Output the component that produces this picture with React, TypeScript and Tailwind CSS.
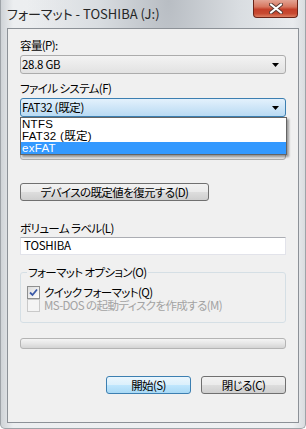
import React from 'react';

// Windows 7 style "format" dialog (Japanese UI)

const jp = "font-['Noto_Sans_CJK_JP',sans-serif] [font-feature-settings:'palt']";

function Arrow() {
    return (
        <svg width="7" height="4" viewBox="0 0 7 4" className="shrink-0">
            <path d="M0 0 H7 L3.5 4 Z" fill="#000" />
        </svg>
    );
}

function Label({ children }: { children?: React.ReactNode }) {
    return <div className="h-[16px] leading-[16px] text-[11.5px] tracking-[-0.6px] text-black">{children}</div>;
}

function Combo({ value, focused = false }: { value?: string; focused?: boolean }) {
    const look = focused
        ? 'border-[#3c7fb1] bg-gradient-to-b from-[#e3f1fc] to-[#b9daf3]'
        : 'border-[#acacac] bg-gradient-to-b from-[#f3f3f3] to-[#e2e2e2]';
    return (
        <div className={`h-[19px] w-[266px] rounded-[3px] border ${look} flex items-center justify-between pl-[1px] pr-[6px]`}>
            <span className="text-[11.5px] leading-[17px] tracking-[-0.3px] text-black">{value}</span>
            <Arrow />
        </div>
    );
}

function Button({ children, width, focused = false }: { children: React.ReactNode; width: string; focused?: boolean }) {
    const look = focused
        ? 'border-[#3c7fb1] bg-[linear-gradient(to_bottom,#ebf6fd_0%,#dbf0fc_48%,#bfe6fd_52%,#a9d9f5_100%)]'
        : 'border-[#707070] bg-[linear-gradient(to_bottom,#f2f2f2_0%,#ebebeb_48%,#dddddd_52%,#cfcfcf_100%)]';
    return (
        <button className={`h-[18px] ${width} rounded-[3px] border ${look} text-[11.5px] tracking-[-0.6px] leading-[16px] text-black flex items-center justify-center`}>
            {children}
        </button>
    );
}

function CheckBox({ checked, disabled = false }: { checked: boolean; disabled?: boolean }) {
    return (
        <div
            className={`w-[13px] h-[13px] shrink-0 border ${disabled ? 'border-[#c9c9c9] bg-[#f4f4f4]' : 'border-[#8e8f8f] bg-gradient-to-br from-[#dcdcdc] to-[#ffffff]'} flex items-center justify-center`}
        >
            {checked && (
                <svg width="9" height="9" viewBox="0 0 9 9">
                    <path d="M1 4.5 L3.5 7 L8 1.5" stroke="#3b5aa8" strokeWidth="1.8" fill="none" />
                </svg>
            )}
        </div>
    );
}

export default function App() {
    return (
        <div
            className={`${jp} relative w-[306px] h-[429px] overflow-hidden border-x border-b border-[#9ea3a8] rounded-b-[5px] bg-[radial-gradient(ellipse_at_55%_0%,#b8bdc3_0%,#d9dde1_30%,transparent_60%),linear-gradient(to_right,#cfd3d7_0%,#eceef0_4%,#eef0f2_96%,#d9dcdf_100%)]`}
        >
            {/* title bar */}
            <div className="h-[28px] flex items-center pl-[6px] text-[13px] leading-[16px] text-[#262626]">
                フォーマット - TOSHIBA (J:)
            </div>

            <button className="absolute top-0 right-[7px] w-[45px] h-[18px] rounded-b-[4px] border border-t-0 border-[#6b2418] bg-[linear-gradient(to_bottom,#e3a494_0%,#d7765f_40%,#c4402a_55%,#c84a31_80%,#dc7f63_100%)] flex items-center justify-center">
                <svg width="14" height="11" viewBox="0 0 14 11">
                    <path d="M2 1.5 L12 9.5 M12 1.5 L2 9.5" stroke="#5b3a34" strokeWidth="4" strokeLinecap="round" />
                    <path d="M2 1.5 L12 9.5 M12 1.5 L2 9.5" stroke="#ffffff" strokeWidth="2.2" strokeLinecap="round" />
                </svg>
            </button>

            {/* client area */}
            <div className="mx-[6px] h-[395px] border border-[#8c9197] bg-[#f0f0f0] flex flex-col pl-[12px]">
                <div className="mt-[8px]">
                    <Label>容量(P):</Label>
                </div>
                <div className="mt-[2px]">
                    <Combo value="28.8 GB" />
                </div>

                <div className="mt-[6px]">
                    <Label>ファイル システム(F)</Label>
                </div>
                <div className="mt-[2px] relative z-10">
                    <Combo value="FAT32 (既定)" focused />
                    <div className="absolute top-full left-0 w-[267px] border border-[#646464] bg-white shadow-[2px_2px_2px_rgba(0,0,0,0.35)] font-['Liberation_Sans','Noto_Sans_CJK_JP',sans-serif] text-[11.5px] tracking-[0.3px]">
                        <div className="h-[12px] leading-[12px] pl-[1px] text-black">NTFS</div>
                        <div className="h-[12px] leading-[12px] pl-[1px] text-black">FAT32 (既定)</div>
                        <div className="h-[12px] leading-[12px] pl-[1px] text-white bg-[#3399ff]">exFAT</div>
                    </div>
                </div>

                {/* allocation size row, covered by the open list */}
                <div className="mt-[6px]">
                    <Label />
                </div>
                <div className="mt-[2px]">
                    <Combo />
                </div>

                <div className="mt-[23px]">
                    <Button width="w-[189px]">デバイスの既定値を復元する(D)</Button>
                </div>

                <div className="mt-[19px]">
                    <Label>ボリューム ラベル(L)</Label>
                </div>
                <div className="mt-[1px] h-[18px] w-[266px] border border-[#e2e3ea] border-t-[#abadb3] bg-white flex items-center pl-[3px] text-[11.5px] tracking-[-0.2px] text-black">
                    TOSHIBA
                </div>

                <fieldset className="mt-[9px] w-[266px] rounded-[3px] border border-[#d5dfe5] pl-[6px] pb-[10px]">
                    <legend className="px-[1px] h-[16px] leading-[16px] text-[11.5px] tracking-[-0.6px] text-black">フォーマット オプション(O)</legend>
                    <div className="mt-[6px] h-[13px] flex items-center gap-[4px] text-[11.5px] tracking-[-0.6px] text-black">
                        <CheckBox checked />
                        <span className="block h-[13px] leading-[13px]">クイック フォーマット(Q)</span>
                    </div>
                    <div className="h-[13px] flex items-center gap-[4px] text-[11.5px] tracking-[-0.6px] text-[#a3a3a3]">
                        <CheckBox checked={false} disabled />
                        <span className="block h-[13px] leading-[13px]">MS-DOS の起動ディスクを作成する(M)</span>
                    </div>
                </fieldset>

                <div className="mt-[15px] h-[11px] w-[266px] rounded-[3px] border border-[#b4b4b4] bg-[linear-gradient(to_bottom,#f4f4f4_0%,#e6e6e6_50%,#d4d4d4_100%)]" />

                <div className="mt-[27px] w-[266px] flex justify-end gap-[10px]">
                    <Button width="w-[85px]" focused>
                        開始(S)
                    </Button>
                    <Button width="w-[85px]">閉じる(C)</Button>
                </div>
            </div>
        </div>
    );
}
